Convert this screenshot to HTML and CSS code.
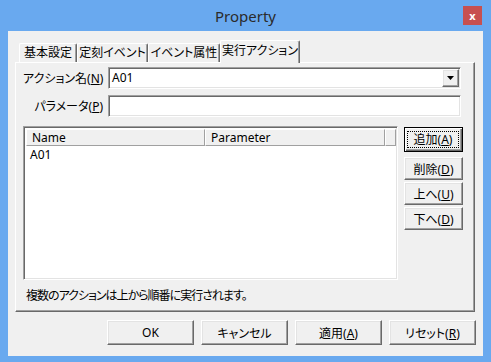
FILE: index.html
```html
<!DOCTYPE html>
<html lang="ja">
<head>
  <meta charset="UTF-8">
  <title>Property</title>
  <link rel="stylesheet" href="styles.css">
</head>
<body>
  <div class="window">
    <div class="titlebar">
      <span class="title">Property</span>
      <button class="close">x</button>
    </div>

    <div class="client">
      <div class="tabs">
        <div class="tab tab-basic">基本設定</div>
        <div class="tab tab-time">定刻イベント</div>
        <div class="tab tab-attr">イベント属性</div>
        <div class="tab tab-action active">実行アクション</div>
      </div>

      <div class="page">
        <div class="form">
          <label class="label">アクション名(<u>N</u>)</label>
          <div class="combo sunken">
            <span class="value">A01</span>
            <span class="drop raised">
              <svg width="7" height="4" viewBox="0 0 7 4"><polygon points="0,0 7,0 3.5,4" fill="#000"/></svg>
            </span>
          </div>
          <label class="label">パラメータ(<u>P</u>)</label>
          <div class="textbox sunken"></div>
        </div>

        <div class="list-area">
          <div class="list sunken">
            <div class="list-head">
              <div class="col col-name">Name</div>
              <div class="col col-param">Parameter</div>
              <div class="col col-rest"></div>
            </div>
            <div class="list-row">A01</div>
          </div>
          <div class="side">
            <button class="btn default"><span class="focus">追加(<u>A</u>)</span></button>
            <button class="btn">削除(<u>D</u>)</button>
            <button class="btn">上へ(<u>U</u>)</button>
            <button class="btn">下へ(<u>D</u>)</button>
          </div>
        </div>

        <p class="note">複数のアクションは上から順番に実行されます。</p>
      </div>

      <div class="actions">
        <button class="btn wide">OK</button>
        <button class="btn wide">キャンセル</button>
        <button class="btn wide">適用(<u>A</u>)</button>
        <button class="btn wide">リセット(<u>R</u>)</button>
      </div>
    </div>
  </div>
</body>
</html>
```

FILE: styles.css
```css
body {
  margin: 0;
  font-family: "Noto Sans", "Noto Sans CJK JP", sans-serif;
  font-size: 12px;
  font-feature-settings: "palt";
  color: #000;
}
.window {
  width: 491px;
  height: 362px;
  background-color: #69a9ef;
  display: flex;
  flex-direction: column;
}
.titlebar {
  height: 31px;
  display: grid;
  grid-template-columns: 1fr auto 1fr;
  align-items: center;
}
.title {
  grid-column: 2;
  font-size: 15px;
  color: #2b2b2b;
}
.close {
  grid-column: 3;
  justify-self: end;
  align-self: start;
  margin: 6px 9px 0 0;
  width: 19px;
  height: 19px;
  padding: 0;
  border: none;
  background-color: #c75050;
  color: #fff;
  font-family: "Noto Sans", sans-serif;
  font-weight: bold;
  font-size: 11px;
  line-height: 17px;
}
.client {
  flex: 1;
  margin: 0 8px 6px 8px;
  background-color: #f0f0f0;
  display: flex;
  flex-direction: column;
}

/* tabs */
.tabs {
  height: 31px;
  padding-left: 11px;
  display: flex;
  align-items: flex-end;
}
.tab {
  box-sizing: border-box;
  height: 19px;
  line-height: 17px;
  text-align: center;
  border-top: 1px solid #fff;
  border-left: 1px solid #fff;
  border-right: 1px solid #696969;
  box-shadow: inset -1px 0 0 #a0a0a0;
  border-radius: 2px 2px 0 0;
  white-space: nowrap;
}
.tab-basic { width: 58px; }
.tab-time { width: 71px; }
.tab-attr { width: 72px; }
.tab-action { width: 80px; }
.tab.active {
  height: 23px;
  line-height: 19px;
  margin-bottom: -1px;
  background-color: #f0f0f0;
  position: relative;
  z-index: 1;
}

/* tab page */
.page {
  box-sizing: border-box;
  height: 250px;
  margin: 0 8px 0 7px;
  padding: 4px 0 0 7px;
  border-top: 1px solid #fff;
  border-left: 1px solid #fff;
  border-right: 1px solid #696969;
  border-bottom: 1px solid #696969;
  box-shadow: inset -1px -1px 0 #a0a0a0;
}
.form {
  display: grid;
  grid-template-columns: 80px 353px;
  column-gap: 5px;
  row-gap: 6px;
  align-items: center;
}
.label {
  text-align: right;
  white-space: nowrap;
}
.sunken {
  box-sizing: border-box;
  border: 1px solid;
  border-color: #a0a0a0 #fff #fff #a0a0a0;
  box-shadow: inset 1px 1px 0 #696969, inset -1px -1px 0 #e3e3e3;
  background-color: #fff;
}
.raised {
  box-sizing: border-box;
  border: 1px solid;
  border-color: #fff #696969 #696969 #fff;
  box-shadow: inset -1px -1px 0 #a0a0a0, inset 1px 1px 0 #e3e3e3;
  background-color: #f0f0f0;
}
.combo, .textbox {
  height: 22px;
}
.combo {
  display: flex;
  align-items: stretch;
  padding: 1px;
}
.combo .value {
  flex: 1;
  padding-left: 2px;
  line-height: 18px;
}
.drop {
  width: 17px;
  display: flex;
  align-items: center;
  justify-content: center;
}

/* list */
.list-area {
  display: flex;
  gap: 6px;
  margin-top: 9px;
}
.list {
  width: 375px;
  height: 154px;
  padding: 1px;
}
.list-head {
  display: flex;
  height: 17px;
  margin: 1px 0 0 1px;
}
.col {
  box-sizing: border-box;
  height: 17px;
  line-height: 15px;
  padding-left: 5px;
  background-color: #f0f0f0;
  border-top: 1px solid #fff;
  border-left: 1px solid #fff;
  border-right: 1px solid #a0a0a0;
  border-bottom: 1px solid #a0a0a0;
}
.col-name { width: 180px; }
.col-param { width: 181px; }
.col-rest { width: 11px; }
.list-row {
  padding: 1px 0 0 5px;
  line-height: 16px;
}
.side {
  width: 59px;
  display: flex;
  flex-direction: column;
}

/* buttons */
.btn {
  box-sizing: border-box;
  height: 23px;
  padding: 0;
  font: inherit;
  color: #000;
  background-color: #f0f0f0;
  border: 1px solid;
  border-color: #fff #696969 #696969 #fff;
  box-shadow: inset -1px -1px 0 #a0a0a0, inset 1px 1px 0 #e3e3e3;
  white-space: nowrap;
}
.side .btn { margin-top: 2px; }
.side .btn.default {
  height: 25px;
  margin: 1px 0 3px 0;
  border: 1px solid #000;
  box-shadow: inset 1px 1px 0 #fff, inset -1px -1px 0 #696969, inset -2px -2px 0 #a0a0a0;
}
.focus {
  display: block;
  margin: 2px 3px 3px 2px;
  border: 1px dotted #000;
  line-height: 15px;
}
.note {
  margin: 8px 0 0 3px;
  line-height: 16px;
  letter-spacing: -1px;
}
.actions {
  display: flex;
  justify-content: flex-end;
  gap: 7px;
  margin-top: 8px;
  padding-right: 7px;
}
.btn.wide {
  width: 87px;
  height: 25px;
}
```
